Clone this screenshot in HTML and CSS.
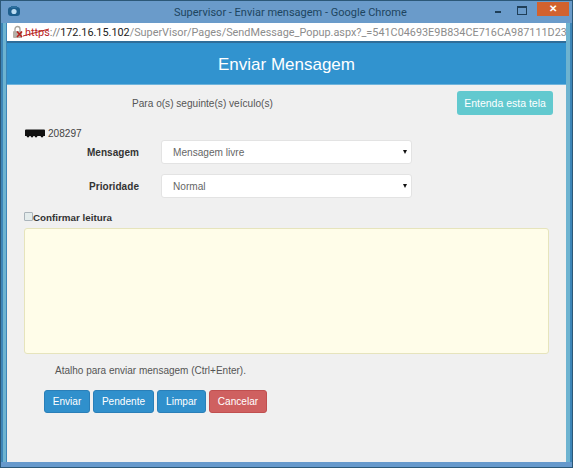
FILE: index.html
```html
<!DOCTYPE html>
<html lang="pt">
<head>
<meta charset="utf-8">
<title>Supervisor - Enviar mensagem</title>
<link rel="stylesheet" href="styles.css">
</head>
<body>
<div class="window">
  <div class="titlebar">
    <svg class="app-icon" width="14" height="12" viewBox="0 0 14 12"><rect x="1" y="2" width="12" height="9" rx="3" fill="#1d5f8e"/><circle cx="7" cy="6.5" r="2.6" fill="#bcdcf2"/><rect x="4" y="1" width="6" height="2" fill="#2d6f9e"/></svg>
    <span class="title">Supervisor - Enviar mensagem - Google Chrome</span>
    <div class="controls">
      <span class="min"></span>
      <span class="max"></span>
      <span class="close">✕</span>
    </div>
  </div>
  <div class="urlbar">
    <svg class="lock" width="13" height="14" viewBox="0 0 13 14"><rect x="1" y="6" width="9" height="7" rx="1" fill="#b5b0a8"/><path d="M3 6V4a2.5 2.5 0 0 1 5 0v2" fill="none" stroke="#a8a39b" stroke-width="1.3"/><path d="M5 6.5l5 5.5M10 6.5l-5 5.5" stroke="#b8231f" stroke-width="1.6"/></svg>
    <span class="scheme">https<svg class="strike" width="32" height="10" viewBox="0 0 32 10"><path d="M0 8L26 1" stroke="#b8231f" stroke-width="1"/></svg></span><span class="sep">://</span><span class="host">172.16.15.102</span><span class="path">/SuperVisor/Pages/SendMessage_Popup.aspx?_=541C04693E9B834CE716CA987111D23</span>
  </div>
  <div class="client">
    <header class="head">Enviar Mensagem</header>
    <main class="content">
      <div class="top-row">
        <span class="para">Para o(s) seguinte(s) veículo(s)</span>
        <button class="btn btn-info" type="button">Entenda esta tela</button>
      </div>
      <div class="vehicle">
        <svg width="20" height="9" viewBox="0 0 20 9"><path d="M0 1.5A1 1 0 0 1 1 .5H19A1 1 0 0 1 20 1.5V7H0Z" fill="#111"/><circle cx="3" cy="7" r="1.4" fill="#111"/><circle cx="7" cy="7" r="1.4" fill="#111"/><circle cx="11" cy="7" r="1.4" fill="#111"/><circle cx="17" cy="7" r="1.4" fill="#111"/></svg>
        <span>208297</span>
      </div>
      <div class="field field-msg">
        <label class="label">Mensagem</label>
        <div class="select"><span>Mensagem livre</span><i class="arrow"></i></div>
      </div>
      <div class="field field-pri">
        <label class="label">Prioridade</label>
        <div class="select"><span>Normal</span><i class="arrow"></i></div>
      </div>
      <div class="confirm"><span class="check"></span><b>Confirmar leitura</b></div>
      <div class="textarea"></div>
      <p class="hint">Atalho para enviar mensagem (Ctrl+Enter).</p>
      <div class="actions">
        <button class="btn btn-blue b-enviar" type="button">Enviar</button>
        <button class="btn btn-blue b-pend" type="button">Pendente</button>
        <button class="btn btn-blue b-limpar" type="button">Limpar</button>
        <button class="btn btn-red b-cancel" type="button">Cancelar</button>
      </div>
    </main>
  </div>
</div>
</body>
</html>
```
FILE: styles.css
```css
* { box-sizing: border-box; }
html, body { margin: 0; padding: 0; }
body { width: 573px; height: 468px; overflow: hidden; font-family: "Liberation Sans", Arial, sans-serif; background: #6a9bca; }
.window { width: 573px; height: 468px; display: flex; flex-direction: column; border: 1px solid #2c5878; background: linear-gradient(to right, #3d86b8 0 2px, #6db3d0 2px 5px, #3d86b8 5px 565px, #6db3d0 565px 569px, #3d86b8 569px); padding: 0 6px 5px 6px; position: relative; }
.window::after { content: ""; position: absolute; left: 0; right: 0; bottom: 0; height: 5px; background: #6699cc; }
.titlebar { height: 22px; display: flex; align-items: center; margin: 0 -6px; padding: 0 0 0 6px; background: #6a9bca; position: relative; flex: none; }
.app-icon { flex: none; margin-top: -2px; }
.title { position: absolute; left: 173px; top: 5px; font-family: Roboto, "Noto Sans", sans-serif; font-size: 11px; line-height: 14px; color: #1d4560; white-space: nowrap; }
.controls { display: flex; align-items: flex-start; align-self: flex-start; flex: none; margin: 0 3px 0 auto; }
.min { width: 6px; height: 2px; background: #1f3f58; margin: 10px 16px 0 0; }
.max { width: 10px; height: 9px; border: 1px solid #1f3f58; border-top-width: 2px; margin: 5px 10px 0 0; }
.close { width: 32px; height: 14px; background: #d2622e; color: #fff; text-align: center; font-size: 10px; line-height: 14px; margin-top: 1px; font-weight: bold; }
.urlbar { height: 18px; width: 559px; background: #fff; display: flex; align-items: center; flex: none; font-family: Roboto, "Noto Sans", sans-serif; font-size: 10.85px; white-space: nowrap; overflow: hidden; padding-left: 5px; }
.lock { flex: none; margin-right: 0; }
.scheme { color: #b8231f; position: relative; }
.strike { position: absolute; left: -2px; top: 2px; }
.sep { color: #777; }
.host { color: #222; }
.path { color: #8c8c8c; }
.client { flex: 1; display: flex; flex-direction: column; width: 559px; min-height: 0; border-top: 2px solid #2f6d99; }
.head { height: 42px; flex: none; background: #3193cf; border-bottom: 1px solid #6fb4dc; color: #fff; text-align: center; font-size: 17px; line-height: 43px; }
.content { flex: 1; background: #f0f0f0; color: #444; font-size: 10.1px; padding: 0 0 0 17px; }
.top-row { height: 31px; display: flex; align-items: flex-start; justify-content: space-between; padding: 6px 13px 0 0; }
.para { margin: 7px 0 0 108px; color: #555; }
.btn { font-family: "Liberation Sans", Arial, sans-serif; font-size: 10.1px; color: #fff; border-radius: 3px; border: 1px solid transparent; padding: 0; height: 23px; }
.btn-info { background: #62c9cf; width: 96px; height: 24px; font-weight: normal; font-size: 10.5px; }
.vehicle { display: flex; align-items: center; gap: 3px; height: 12px; margin: 11px 0 0 1px; color: #444; }
.vehicle svg { flex: none; }
.field { display: flex; align-items: center; height: 24px; }
.field-msg { margin-top: 1px; }
.field-pri { margin-top: 10px; }
.label { width: 115px; text-align: right; font-weight: bold; color: #333; font-size: 10px; letter-spacing: .05px; }
.select { width: 251px; height: 24px; margin-left: 22px; background: #fff; border: 1px solid #e3e3e3; border-radius: 3px; display: flex; align-items: center; justify-content: space-between; padding: 0 4px 0 11px; color: #666; }
.arrow { width: 0; height: 0; border-left: 2.5px solid transparent; border-right: 2.5px solid transparent; border-top: 4px solid #111; }
.confirm { display: flex; align-items: center; height: 12px; margin-top: 13px; color: #333; font-size: 9.8px; }
.check { width: 9px; height: 9px; border: 1px solid #aab4bb; background: #e4ecec; border-radius: 1px; margin: -2px 0 0 0; flex: none; }
.textarea { width: 525px; height: 126px; margin-top: 5px; background: #fffde9; border: 1px solid #e6e4bc; border-radius: 3px; }
.hint { margin: 11px 0 0 31px; font-size: 10px; line-height: 12px; color: #555; }
.actions { display: flex; gap: 3px; margin: 13px 0 0 20px; }
.btn-blue { background: #3090cc; border-color: #2a7fb8; }
.btn-red { background: #cf6060; border-color: #c04f4f; }
.b-enviar { width: 46px; }
.b-pend { width: 61px; }
.b-limpar { width: 49px; }
.b-cancel { width: 58px; }
```
